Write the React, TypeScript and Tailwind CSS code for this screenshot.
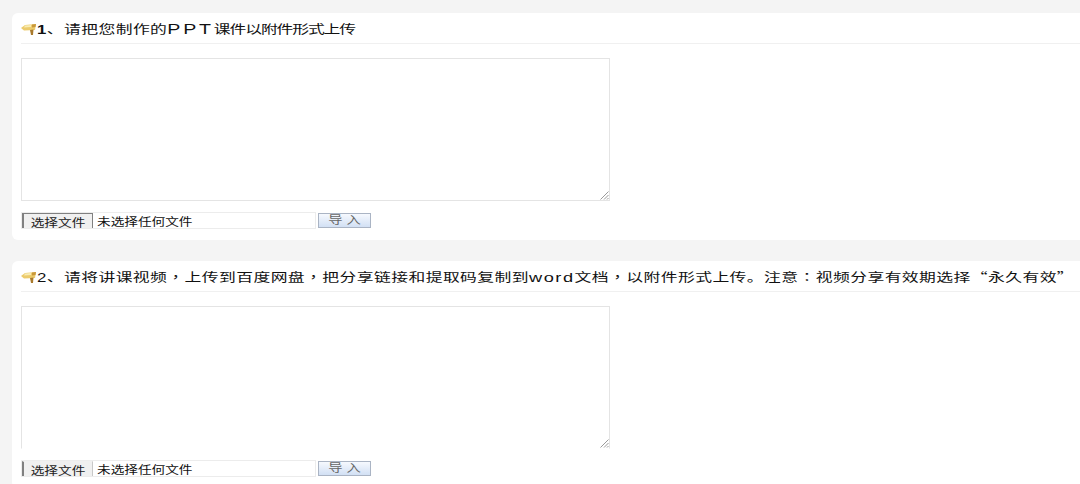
import type { ReactNode } from "react";

const cjk = { fontFamily: '"Liberation Sans", "Noto Sans CJK SC", sans-serif' };

function HandIcon() {
  return (
    <svg width="16" height="14" viewBox="0 0 16 14" className="shrink-0">
      <path d="M0 7 L4 4 L15 3 L14 9 L3 9.5 Z" fill="#eccb6c" />
      <path d="M4 4.6 L10 4 L10 6 L3 6.5 Z" fill="#f8ecb4" />
      <path d="M11 3.4 L15 3 L14.5 6 L11 6.4 Z" fill="#c9983a" />
      <path d="M9 9 L12.5 8.6 L12 14 L10 14 Z" fill="#a97a2c" />
    </svg>
  );
}

function Section({ title, last }: { title: ReactNode; last?: boolean }) {
  return (
    <section className="rounded-l-[6px] bg-white pl-[9px]">
      <div className="flex h-[31px] items-center border-b border-[#f0f0f0]">
        <HandIcon />
        <h2 className="origin-left scale-x-[1.4] pt-[2px] text-[12px] leading-none font-normal tracking-[0.3px] whitespace-nowrap text-[#111]">{title}</h2>
      </div>
      <div className={`relative mt-[14px] h-[143px] w-[589px] border border-[#e4e4e4] ${last ? "border-b-transparent" : ""}`}>
        <svg width="9" height="9" viewBox="0 0 9 9" className="absolute right-0 bottom-0 text-[#999]">
          <path d="M0.5 8.5 L8.5 0.5 M4 8.5 L8.5 4 M7 8.5 L8.5 7" stroke="currentColor" strokeWidth="1" fill="none" />
        </svg>
      </div>
      <div className="mt-[11px] flex h-[17px] items-start">
        <div className="flex h-[17px] w-[295px] overflow-hidden border border-[#ececec]">
          <button
            className={`flex h-[17px] w-[71px] shrink-0 justify-center overflow-hidden border-t border-r border-l-2 border-l-[#808080] bg-[#f0f0f0] text-[11px] leading-[18px] text-[#222] ${
              last ? "border-t-transparent border-r-[#c8c8c8]" : "border-t-[#808080] border-r-[#808080]"
            }`}
          >
            <span className="scale-x-[1.24]">选择文件</span>
          </button>
          <span className="ml-[4px] origin-left scale-x-[1.24] text-[11px] leading-[19px] whitespace-nowrap text-[#111]">未选择任何文件</span>
        </div>
        <button className="mt-[1px] ml-[2px] flex h-[15px] w-[53px] items-center justify-center border border-[#aab4c4] bg-gradient-to-b from-[#f6f9fe] to-[#d2e0f4] text-[11px] text-[#666]">
          <span className="scale-x-[1.3]">导 入</span>
        </button>
      </div>
      <div className="h-[11px]" />
    </section>
  );
}

const wide = "font-['Noto_Sans_CJK_TC']";

export default function App() {
  return (
    <div className="h-[484px] w-[1080px] overflow-hidden bg-[#f4f4f4] pt-[13px] pl-[12px]" style={cjk}>
      <div className="flex flex-col gap-[21px]">
        <Section
          title={
            <>
              <span className="font-bold">1</span>、请把您制作的<span className="text-[14px] tracking-[2px]">PPT</span>
              <span className="tracking-[-0.8px]">课件以附件形式上传</span>
            </>
          }
        />
        <Section
          last
          title={
            <>
              2、请将讲课视频<span className={wide}>，</span>上传到百度网盘<span className={wide}>，</span>把分享链接和提取码复制到
              <span className="text-[13px] tracking-[1.1px]">word</span>文档<span className={wide}>，</span>以附件形式上传。注意<span className={wide}>：</span>视频分享有效期选择
              <span className={wide}>“</span>永久有效<span className={wide}>”</span>
            </>
          }
        />
      </div>
    </div>
  );
}
